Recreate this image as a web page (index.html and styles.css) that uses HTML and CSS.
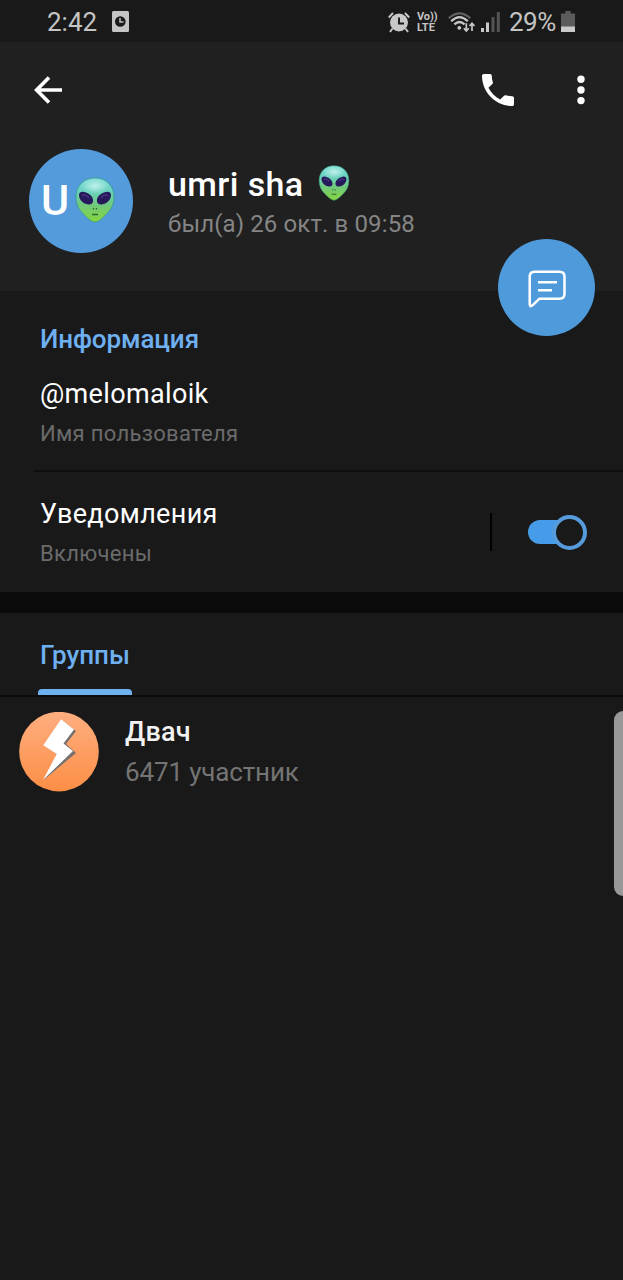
FILE: index.html
```html
<!DOCTYPE html>
<html lang="ru">
<head>
<meta charset="utf-8">
<title>umri sha</title>
<link rel="stylesheet" href="styles.css">
</head>
<body>
<svg class="defs" width="0" height="0" aria-hidden="true">
  <defs>
    <linearGradient id="skin" x1="0" y1="0" x2="0" y2="1">
      <stop offset="0" stop-color="#7edcd6"/><stop offset=".3" stop-color="#6ad2c0"/><stop offset=".62" stop-color="#70c97c"/><stop offset="1" stop-color="#86d63c"/>
    </linearGradient>
    <radialGradient id="shine"><stop offset="0" stop-color="#d2f8f4" stop-opacity=".8"/><stop offset="1" stop-color="#d2f8f4" stop-opacity="0"/></radialGradient>
    <symbol id="alien" viewBox="0 0 40 46">
      <path d="M20 1C8.500 1 1 9 1 20c0 7 2.500 12 7 16.500C12 40.500 16 45 20 45s8-4.500 12-8.500C36.500 32 39 27 39 20 39 9 31.500 1 20 1z" fill="url(#skin)" stroke="#2f9a80" stroke-width="1" stroke-opacity=".7"/>
      <ellipse cx="20" cy="9" rx="14" ry="8" fill="url(#shine)"/>
      <path d="M4 18c0-3 3-4 7-2.500 5 1.800 7.500 5.500 7 9-.4 3-4 3.500-7.500 2.300C6.500 25.300 4 21.500 4 18zM36 18c0-3-3-4-7-2.500-5 1.800-7.500 5.500-7 9 .4 3 4 3.500 7.500 2.300C33.500 25.300 36 21.500 36 18z" fill="#28195c"/>
      <path d="M7 19c2-2 5-1 7 2M33 19c-2-2-5-1-7 2" stroke="#45357c" stroke-width="1.500" fill="none"/>
      <path d="M18.500 31v1.500M21.500 31v1.500M17 37.500h6" stroke="#2c6830" stroke-width="1.300" fill="none"/>
    </symbol>
  </defs>
</svg>
<div class="screen">
  <div class="statusbar">
    <span class="clock">2:42</span>
    <svg class="notice" width="17" height="21" viewBox="0 0 17 21"><rect width="17" height="21" rx="1.500" fill="#c4c4c4"/><circle cx="8.300" cy="10.500" r="5.300" fill="#191919"/><path d="M8 7v4h3.500" fill="none" stroke="#c4c4c4" stroke-width="1.500"/></svg>
    <div class="indicators">
      <svg class="alarm" width="22" height="21" viewBox="0 0 22 21"><circle cx="11" cy="10.500" r="9" fill="#c8c8c8"/><path d="M11 5.500v6h5" fill="none" stroke="#191919" stroke-width="1.900"/><path d="M.8 5.500 5 1M21.200 5.500 17 1M4.500 16.500 2 20M17.500 16.500 20 20" stroke="#c8c8c8" stroke-width="1.900"/></svg>
      <div class="volte"><span class="vo">Vo))</span><span class="lte">LTE</span></div>
      <svg class="wifi" width="28" height="21" viewBox="0 0 28 21" fill="none"><path d="M.8 6.200Q11.500-3.500 22.200 6.200" stroke="#606060" stroke-width="2.300"/><path d="M3.200 9.200Q11.500 1 19.800 9.200M6.400 12.400Q11.500 7.500 16.600 12.400" stroke="#c8c8c8" stroke-width="2.300"/><circle cx="11.300" cy="15.800" r="1.900" fill="#c8c8c8"/><path d="M18.300 11.200v7.500M15.800 16.200l2.500 2.800 2.500-2.800M24 19v-7.500M21.500 14l2.500-2.800 2.500 2.800" stroke="#c8c8c8" stroke-width="1.700"/></svg>
      <svg class="signal" width="20" height="20" viewBox="0 0 20 20"><path d="M0 16h3v4H0zM5 10.500h3V20H5z" fill="#c8c8c8"/><path d="M10.500 5h3v15h-3zM15.800 0h3v20h-3z" fill="#555"/></svg>
      <span class="percent">29%</span>
      <svg class="battery" width="14" height="21" viewBox="0 0 14 21"><path d="M4.300 0h5.400v2.500H14V16H0V2.500h4.300z" fill="#5b5b5b"/><path d="M0 15.500h14V21H0z" fill="#cacaca"/></svg>
    </div>
  </div>

  <header class="header">
    <nav class="toolbar">
      <svg class="back" width="28" height="28" viewBox="0 0 28 28" fill="none" stroke="#fff" stroke-width="3.600"><path d="M28 14H3M15 1.600 2.600 14 15 26.400"/></svg>
      <svg class="call" width="32" height="32" viewBox="3 3 18 18"><path fill="#fff" d="M6.620 10.790c1.440 2.830 3.760 5.140 6.590 6.590l2.200-2.200c.27-.27.670-.36 1.020-.24 1.120.37 2.330.57 3.570.57.550 0 1 .45 1 1V20c0 .55-.45 1-1 1-9.390 0-17-7.610-17-17 0-.55.450-1 1-1h3.500c.55 0 1 .45 1 1 0 1.250.2 2.450.57 3.570.11.350.03.740-.25 1.020l-2.200 2.200z"/></svg>
      <svg class="more" width="8" height="30" viewBox="0 0 8 30" fill="#fff"><circle cx="4" cy="4.300" r="3.700"/><circle cx="4" cy="15" r="3.700"/><circle cx="4" cy="25.600" r="3.700"/></svg>
    </nav>
    <div class="profile">
      <div class="avatar"><span>U</span><svg width="40" height="46"><use href="#alien"/></svg></div>
      <div class="identity">
        <h1 class="name"><span>umri sha</span><svg width="32" height="36"><use href="#alien"/></svg></h1>
        <div class="seen"><span>был(а) 26 окт. в 09:58</span></div>
      </div>
    </div>
    <button class="fab" aria-label="Написать"><svg width="38" height="38" viewBox="0 0 38 38" fill="none" stroke="#fff" stroke-width="2.500" stroke-linejoin="round"><path d="M6.500 1.700h25q5 0 5 5v17q0 5-5 5H11.500L4.500 35.300Q1.700 37.500 1.700 34V6.700q0-5 4.800-5z"/><path d="M10 12.200h19M10 20.200h14"/></svg></button>
  </header>

  <section class="info">
    <h2 class="title"><span>Информация</span></h2>
    <div class="value username"><span>@melomaloik</span></div>
    <div class="caption"><span>Имя пользователя</span></div>
    <div class="notifications">
      <div>
        <div class="value"><span>Уведомления</span></div>
        <div class="caption"><span>Включены</span></div>
      </div>
      <i class="bar"></i>
      <div class="switch"><i class="track"></i><i class="thumb"></i></div>
    </div>
  </section>

  <div class="tabs"><div class="tab"><span>Группы</span></div></div>

  <div class="group">
    <svg class="group-icon" width="80" height="80" viewBox="0 0 80 80">
      <defs><linearGradient id="orange" x1="0" y1="0" x2="0" y2="1"><stop offset="0" stop-color="#ffae80"/><stop offset="1" stop-color="#fc8e46"/></linearGradient></defs>
      <circle cx="40" cy="39.600" r="39.800" fill="url(#orange)"/>
      <path d="M44 9 57 19 47 32 57 41 24.500 68 40 44 27 34z" fill="#75706d"/>
      <path d="M42 7.200 55 17.500 44.500 31.500 54 39 24 68 37.700 42 24.300 33.300z" fill="#fff"/>
    </svg>
    <div>
      <div class="group-name"><span>Двач</span></div>
      <div class="members"><span>6471 участник</span></div>
    </div>
  </div>
  <div class="edge"></div>
</div>
</body>
</html>
```
FILE: styles.css
```css
* { box-sizing: border-box; }
body { margin: 0; background: #191919; font-family: Roboto, sans-serif; }
h1, h2 { margin: 0; }
svg { display: block; flex: none; }
.defs { position: absolute; }
.screen { position: relative; width: 623px; height: 1280px; overflow: hidden; background: #191919; color: #fff; white-space: nowrap; }

.statusbar { display: flex; align-items: center; height: 42px; padding: 2px 47px 0 47px; color: #c4c4c4; font-size: 26px; line-height: 40px; }
.clock { width: 65px; }
.notice { margin-top: -1px; }
.indicators { display: flex; align-items: center; margin-left: auto; }
.alarm { margin-right: 7px; }
.volte { display: flex; flex-direction: column; width: 21px; margin-right: 10px; font-size: 11px; line-height: 11px; font-weight: 700; }
.vo { height: 11px; letter-spacing: -.1px; }
.lte { height: 11px; letter-spacing: .1px; }
.wifi { margin-right: 5px; }
.signal { margin-right: 8px; }
.percent { width: 48px; margin-right: 4px; letter-spacing: -.5px; }
.battery { margin: -2px 1px 0 0; }

.header { position: relative; height: 249px; background: #202020; }
.toolbar { display: flex; align-items: center; height: 96px; padding: 0 38px 0 34px; }
.call { margin-left: auto; }
.more { margin-left: 63px; }
.profile { display: flex; padding: 11px 29px 0; }
.avatar { display: flex; align-items: center; width: 104px; height: 104px; padding: 0 0 2px 12px; border-radius: 50%; background: #549bdc; font-size: 43px; font-weight: 500; }
.avatar span { width: 34px; }
.identity { padding: 14px 0 0 35px; }
.name { display: flex; align-items: center; height: 42px; font-size: 34px; line-height: 42px; font-weight: 500; letter-spacing: .4px; }
.name span { width: 150px; }
.name svg { margin-top: -3px; }
.seen { height: 38px; font-size: 24px; line-height: 38px; letter-spacing: .12px; color: #858585; }
.fab { position: absolute; right: 28px; bottom: -45px; display: grid; place-items: center; width: 97px; height: 97px; padding: 3px 0 0; border: 0; border-radius: 50%; background: #4f9adb; }

.info { height: 322px; padding: 29px 0 0 40px; border-bottom: 21px solid #0a0a0a; }
.title { height: 38px; font-size: 26px; line-height: 38px; font-weight: 500; letter-spacing: -.1px; color: #6eb0f0; }
.value { height: 40px; font-size: 27px; line-height: 40px; letter-spacing: .35px; }
.username { margin-top: 16px; }
.caption { height: 40px; font-size: 22px; line-height: 40px; letter-spacing: .3px; color: #6b6b6b; }
.notifications { display: flex; align-items: center; height: 122px; margin: 16px 0 0 -6px; padding: 0 36px 0 6px; border-top: 2px solid #0e0e0e; }
.notifications .value { margin-top: 4px; }
.bar { width: 2px; height: 38px; margin-left: auto; background: #000; }
.switch { display: flex; align-items: center; width: 60px; height: 36px; margin-left: 35px; }
.track { width: 42px; height: 24px; margin-left: .5px; border-radius: 12px; background: #469ce8; }
.thumb { flex: none; width: 35px; height: 35px; margin-left: -18px; border: 4px solid #569bdc; border-radius: 50%; background: #191919; }

.tabs { height: 84px; padding-left: 38px; border-bottom: 2px solid #0c0c0c; }
.tab { width: 94px; height: 82px; padding-left: 2px; font-size: 26px; line-height: 84px; font-weight: 500; color: #6eb0f0; }
.tab::after { content: ""; display: block; width: 94px; height: 6px; margin: -8px 0 0 -2px; border-radius: 4px 4px 0 0; background: #6eb0f0; }
.group { display: flex; gap: 26px; padding: 15px 0 0 19px; }
.group-name { height: 40px; font-size: 27px; line-height: 40px; font-weight: 500; letter-spacing: .2px; color: #f2f2f2; }
.members { height: 40px; font-size: 26px; line-height: 40px; letter-spacing: -.15px; color: #747474; }
.edge { position: absolute; right: 0; top: 711px; width: 9px; height: 185px; border-radius: 9px 0 0 9px; background: #989898; }
```
